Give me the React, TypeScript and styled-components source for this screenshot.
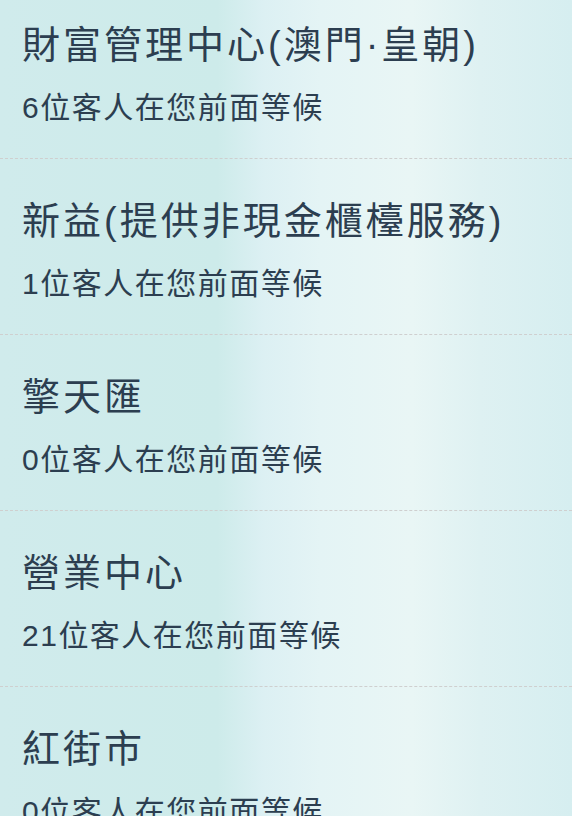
import styled, { createGlobalStyle } from "styled-components";

const GlobalStyle = createGlobalStyle`
  html, body {
    margin: 0;
    padding: 0;
  }
  body {
    font-family: "Liberation Sans", "Noto Sans CJK TC", sans-serif;
    background: linear-gradient(
      90deg,
      #d0ebec 0%,
      #cdebea 38%,
      #dcf0f3 46%,
      #e4f4f5 56%,
      #e9f6f5 72%,
      #def1f2 84%,
      #d6eef0 100%
    );
    min-height: 100vh;
    overflow: hidden;
  }
`;

const BranchList = styled.ul`
  display: flex;
  flex-direction: column;
  gap: 17px;
  margin: 0;
  padding: 0;
  list-style: none;
`;

const BranchItem = styled.li`
  display: flex;
  flex-direction: column;
  padding: 21px 22px 30px;
  border-bottom: 1px dashed #cfcfcf;
  color: #2c3e50;
`;

const BranchName = styled.div`
  font-size: 38px;
  line-height: 48px;
  letter-spacing: 3px;
  white-space: nowrap;
`;

const WaitingText = styled.div`
  margin-top: 19px;
  font-size: 30px;
  line-height: 40px;
  letter-spacing: 1.5px;
  white-space: nowrap;
`;

const branches = [
  { name: "財富管理中心(澳門·皇朝)", waiting: 6 },
  { name: "新益(提供非現金櫃檯服務)", waiting: 1 },
  { name: "擎天匯", waiting: 0 },
  { name: "營業中心", waiting: 21 },
  { name: "紅街市", waiting: 0 },
];

function App() {
  return (
    <>
      <GlobalStyle />
      <BranchList>
        {branches.map((branch) => (
          <BranchItem key={branch.name}>
            <BranchName>{branch.name}</BranchName>
            <WaitingText>{branch.waiting}位客人在您前面等候</WaitingText>
          </BranchItem>
        ))}
      </BranchList>
    </>
  );
}

export default App;
